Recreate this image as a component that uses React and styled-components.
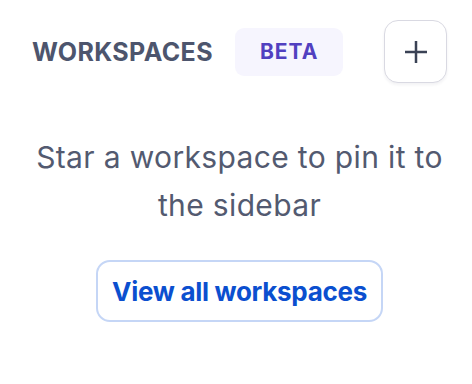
import React from "react";
import styled, { createGlobalStyle } from "styled-components";

const GlobalStyle = createGlobalStyle`
  body {
    margin: 0;
    background: #ffffff;
    font-family: Inter, "Liberation Sans", sans-serif;
  }
`;

const Panel = styled.div`
  padding: 20px 25px 0 32px;
  display: flex;
  flex-direction: column;
  align-items: center;
`;

const Header = styled.div`
  display: flex;
  align-items: center;
  justify-content: space-between;
  align-self: stretch;
`;

const TitleGroup = styled.div`
  display: flex;
  align-items: center;
  gap: 22px;
`;

const Title = styled.h2`
  margin: 0;
  font-size: 25px;
  font-weight: 700;
  letter-spacing: 0.4px;
  color: #4d556d;
`;

const Badge = styled.span`
  display: flex;
  align-items: center;
  justify-content: center;
  height: 48px;
  padding: 0 25px;
  box-sizing: border-box;
  border-radius: 9px;
  background: #f6f5fe;
  color: #5140c0;
  font-size: 21px;
  font-weight: 700;
  letter-spacing: 1px;
`;

const IconButton = styled.button`
  width: 63px;
  height: 63px;
  border-radius: 14px;
  border: 1.5px solid #d9d9e2;
  background: #ffffff;
  box-shadow: 0 2px 3px rgba(30, 35, 60, 0.06);
  display: flex;
  align-items: center;
  justify-content: center;
  padding: 0;
  color: #3a4255;
`;

const Message = styled.p`
  margin: 50px 0 0;
  font-size: 30px;
  line-height: 48px;
  letter-spacing: 0.35px;
  text-align: center;
  color: #535a70;
`;

const LinkButton = styled.button`
  margin-top: 31px;
  height: 62px;
  padding: 0 14px;
  box-sizing: border-box;
  border-radius: 14px;
  border: 2px solid #c5d6f6;
  background: #ffffff;
  color: #0b4fcf;
  font-family: inherit;
  font-size: 26px;
  font-weight: 700;
  letter-spacing: -0.3px;
`;

const PlusIcon = () => (
  <svg width="22" height="22" viewBox="0 0 22 22" fill="none">
    <path d="M11 0v22M0 11h22" stroke="currentColor" strokeWidth="2.5" />
  </svg>
);

const App = () => {
  return (
    <>
      <GlobalStyle />
      <Panel>
        <Header>
          <TitleGroup>
            <Title>WORKSPACES</Title>
            <Badge>BETA</Badge>
          </TitleGroup>
          <IconButton aria-label="Add workspace">
            <PlusIcon />
          </IconButton>
        </Header>
        <Message>
          Star a workspace to pin it to
          <br />
          the sidebar
        </Message>
        <LinkButton>View all workspaces</LinkButton>
      </Panel>
    </>
  );
};

export default App;
